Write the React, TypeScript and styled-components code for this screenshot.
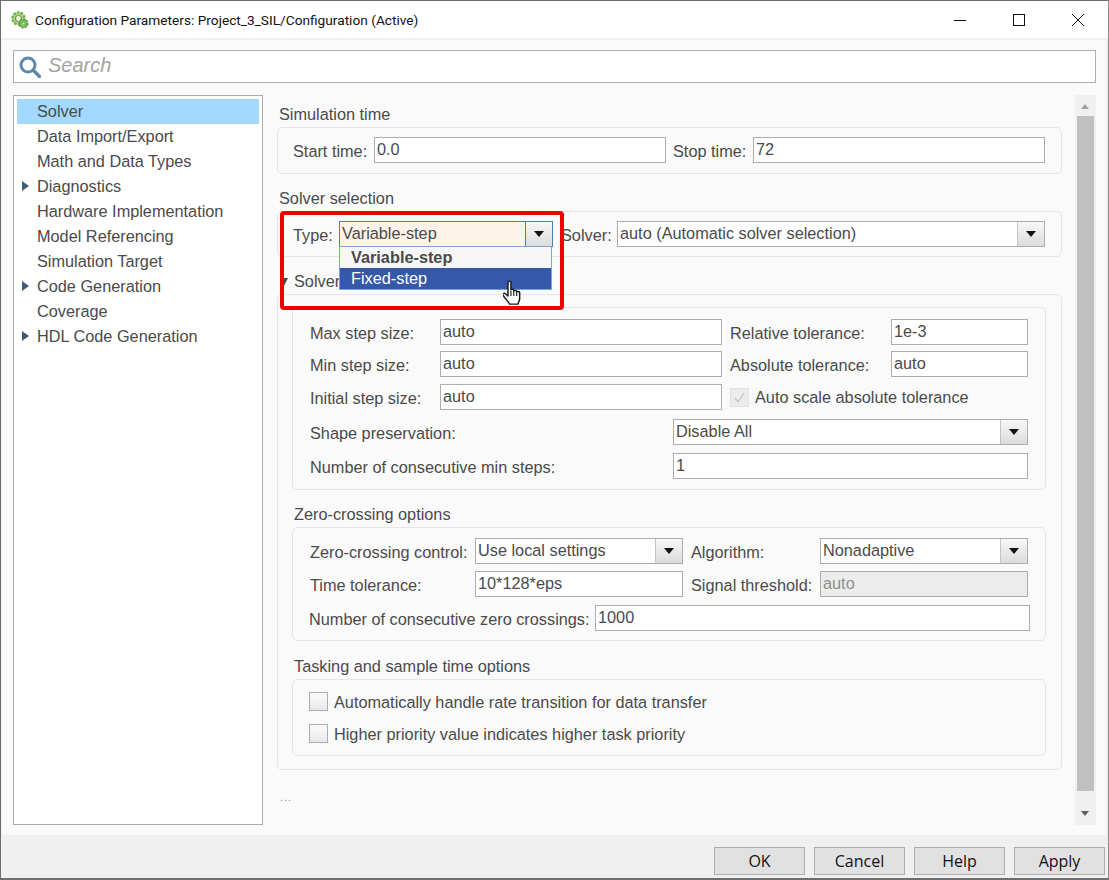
import styled, { createGlobalStyle } from "styled-components";

const GlobalStyle = createGlobalStyle`
  html, body {
    margin: 0;
    padding: 0;
    background: #f0f0f0;
  }
  * {
    box-sizing: border-box;
  }
`;

const treeItems = [
  { label: "Solver", selected: true },
  { label: "Data Import/Export" },
  { label: "Math and Data Types" },
  { label: "Diagnostics", arrow: true },
  { label: "Hardware Implementation" },
  { label: "Model Referencing" },
  { label: "Simulation Target" },
  { label: "Code Generation", arrow: true },
  { label: "Coverage" },
  { label: "HDL Code Generation", arrow: true },
];

function AppIcon() {
  return (
    <svg width="18" height="18" viewBox="0 0 18 18">
      <circle cx="7.5" cy="7.5" r="6" fill="#b5dc8f" stroke="#74b04e" strokeWidth="2.6" strokeDasharray="2.6 1.1" />
      <circle cx="7.5" cy="7.5" r="3" fill="#f4f9ee" stroke="#6aa548" strokeWidth="1.2" />
      <circle cx="12.5" cy="12.5" r="4" fill="#9ccc72" stroke="#4f9a3a" strokeWidth="2" strokeDasharray="2 1" />
      <circle cx="12.5" cy="12.5" r="1.6" fill="#e6f3d8" stroke="#3f8a2e" strokeWidth="0.8" />
    </svg>
  );
}

function SearchIcon() {
  return (
    <svg width="22" height="22" viewBox="0 0 22 22">
      <circle cx="9" cy="9" r="7" fill="none" stroke="#5f87ae" strokeWidth="3" />
      <path d="M14.500 14.500 L20.500 20.500" stroke="#5f87ae" strokeWidth="3.4" strokeLinecap="round" />
    </svg>
  );
}

function HandCursor() {
  return (
    <svg width="18" height="25" viewBox="1 0 14.5 22.5" preserveAspectRatio="none">
      <path
        d="M5 2.2c0-1.500 2.400-1.500 2.400 0V9c0-.9 2.300-1 2.300.1V10c0-1 2.300-1 2.300.2v.8c0-1 2.400-.9 2.400.3v5.400c0 2-1 3.200-1.400 5H6.200c-.5-1.800-2-3.200-3.400-5.200L1 13.700c-.8-1.200.8-2.400 1.900-1.300L5 14.500Z"
        fill="#fff"
        stroke="#1a1a1a"
        strokeWidth="1.2"
        strokeLinejoin="round"
      />
      <path d="M7.400 10v4.500M9.700 10v4.500M12 11v3.500" stroke="#1a1a1a" strokeWidth="0.9" />
    </svg>
  );
}

function Combo({ value, width, active }: { value: string; width: number; active?: boolean }) {
  return (
    <ComboBox $w={width} $active={active}>
      <ComboText>{value}</ComboText>
      <ComboArrow $active={active} />
    </ComboBox>
  );
}

export default function App() {
  return (
    <>
      <GlobalStyle />
      <Window>
        <TitleBar>
          <AppIcon />
          <TitleText>Configuration Parameters: Project_3_SIL/Configuration (Active)</TitleText>
          <WinButtons>
            <svg width="14" height="14" viewBox="0 0 14 14">
              <path d="M1 7.500H13" stroke="#111" strokeWidth="1" />
            </svg>
            <svg width="14" height="14" viewBox="0 0 14 14">
              <rect x="1.500" y="1.500" width="11" height="11" fill="none" stroke="#111" strokeWidth="1" />
            </svg>
            <svg width="14" height="14" viewBox="0 0 14 14">
              <path d="M1 1L13 13M13 1L1 13" stroke="#111" strokeWidth="1" />
            </svg>
          </WinButtons>
        </TitleBar>

        <Content>
          <SearchBar>
            <SearchIcon />
            <SearchPlaceholder>Search</SearchPlaceholder>
          </SearchBar>

          <Columns>
            <Tree>
              {treeItems.map((item) => (
                <TreeRow key={item.label} $selected={item.selected}>
                  {item.arrow && <TreeArrow />}
                  {item.label}
                </TreeRow>
              ))}
            </Tree>

            <Pane>
              <Heading $mt={11}>Simulation time</Heading>
              <Panel $h={47} $pl={15} $pt={9}>
                <Row>
                  <Label $w={81}>Start time:</Label>
                  <Field $w={292} defaultValue="0.0" readOnly />
                  <Label $w={80} $ml={7}>Stop time:</Label>
                  <Field $w={292} defaultValue="72" readOnly />
                </Row>
              </Panel>

              <Heading $mt={16}>Solver selection</Heading>
              <Panel $h={46} $pl={15} $pt={9} $relative>
                <Row>
                  <Label $w={46}>Type:</Label>
                  <ComboAnchor>
                    <Combo value="Variable-step" width={214} active />
                    <Dropdown>
                      <DropdownItem $bold>Variable-step</DropdownItem>
                      <DropdownItem $selected>Fixed-step</DropdownItem>
                    </Dropdown>
                    <Cursor>
                      <HandCursor />
                    </Cursor>
                  </ComboAnchor>
                  <Label $w={56} $ml={8}>Solver:</Label>
                  <Combo value="auto (Automatic solver selection)" width={428} />
                </Row>
                <RedBox />
              </Panel>

              <Heading $mt={16} $pl={17}>
                <Collapse />
                Solver
              </Heading>
              <OuterPanel>
                <Panel $h={183} $pl={17} $pt={11}>
                  <Row>
                    <Label $w={130}>Max step size:</Label>
                    <Field $w={282} defaultValue="auto" readOnly />
                    <Label $w={161} $ml={8}>Relative tolerance:</Label>
                    <Field $w={137} defaultValue="1e-3" readOnly />
                  </Row>
                  <Row $mt={6}>
                    <Label $w={130}>Min step size:</Label>
                    <Field $w={282} defaultValue="auto" readOnly />
                    <Label $w={161} $ml={8}>Absolute tolerance:</Label>
                    <Field $w={137} defaultValue="auto" readOnly />
                  </Row>
                  <Row $mt={7}>
                    <Label $w={130}>Initial step size:</Label>
                    <Field $w={282} defaultValue="auto" readOnly />
                    <CheckBox $ml={8} $disabled>
                      <svg width="15" height="15" viewBox="0 0 15 15">
                        <path d="M3 8l3 4 6-9" fill="none" stroke="#c4c4c4" strokeWidth="1.300" />
                      </svg>
                    </CheckBox>
                    <CheckLabel $ml={6}>Auto scale absolute tolerance</CheckLabel>
                  </Row>
                  <Row $mt={9}>
                    <Label $w={363}>Shape preservation:</Label>
                    <Combo value="Disable All" width={355} />
                  </Row>
                  <Row $mt={8}>
                    <Label $w={363}>Number of consecutive min steps:</Label>
                    <Field $w={355} defaultValue="1" readOnly />
                  </Row>
                </Panel>

                <Heading $mt={16} $pl={2}>Zero-crossing options</Heading>
                <Panel $h={114} $pl={17} $pt={10}>
                  <Row>
                    <Label $w={165}>Zero-crossing control:</Label>
                    <Combo value="Use local settings" width={208} />
                    <Label $w={129} $ml={8}>Algorithm:</Label>
                    <Combo value="Nonadaptive" width={208} />
                  </Row>
                  <Row $mt={7}>
                    <Label $w={165}>Time tolerance:</Label>
                    <Field $w={208} defaultValue="10*128*eps" readOnly />
                    <Label $w={129} $ml={8}>Signal threshold:</Label>
                    <Field $w={208} defaultValue="auto" readOnly $disabled />
                  </Row>
                  <Row $mt={8} $ml={-1}>
                    <Label $w={286}>Number of consecutive zero crossings:</Label>
                    <Field $w={435} defaultValue="1000" readOnly />
                  </Row>
                </Panel>

                <Heading $mt={17} $pl={2}>Tasking and sample time options</Heading>
                <Panel $h={77} $pl={16} $pt={12}>
                  <CheckRow>
                    <CheckBox />
                    <CheckLabel $ml={6}>Automatically handle rate transition for data transfer</CheckLabel>
                  </CheckRow>
                  <CheckRow $mt={13}>
                    <CheckBox />
                    <CheckLabel $ml={6}>Higher priority value indicates higher task priority</CheckLabel>
                  </CheckRow>
                </Panel>
              </OuterPanel>
              <Ellipsis>...</Ellipsis>
            </Pane>

            <ScrollBar>
              <ScrollUp />
              <ScrollThumb />
              <ScrollDown />
            </ScrollBar>
          </Columns>
        </Content>

        <Footer>
          <DialogButton>OK</DialogButton>
          <DialogButton>Cancel</DialogButton>
          <DialogButton>Help</DialogButton>
          <DialogButton>Apply</DialogButton>
        </Footer>
      </Window>
    </>
  );
}

const Window = styled.div`
  width: 1109px;
  height: 880px;
  display: flex;
  flex-direction: column;
  overflow: hidden;
  background: #f0f0f0;
  border-left: 1px solid #6e6e6e;
  border-top: 1px solid #6e6e6e;
  border-right: 1px solid #8a8a8a;
  border-bottom: 2px solid #6e6e6e;
  font-family: "Liberation Sans", Arial, sans-serif;
  font-size: 16.3px;
  color: #4a4a4a;
`;

const TitleBar = styled.div`
  height: 37px;
  flex: none;
  display: flex;
  align-items: center;
  padding-left: 10px;
  background: #fff;
`;

const TitleText = styled.div`
  margin-left: 6px;
  font-family: Roboto, "Open Sans", sans-serif;
  font-size: 13.7px;
  color: #111;
  white-space: nowrap;
`;

const WinButtons = styled.div`
  margin-left: auto;
  margin-right: 23px;
  display: flex;
  gap: 45px;
`;

const Content = styled.div`
  flex: none;
  height: 795px;
  margin: 2px 2px 0 1px;
  padding: 10px 0 0 11px;
  background: #fafafa;
`;

const SearchBar = styled.div`
  width: 1083px;
  height: 33px;
  display: flex;
  align-items: center;
  padding-left: 5px;
  background: #fff;
  border: 1px solid #adadad;
`;

const SearchPlaceholder = styled.span`
  margin-left: 7px;
  padding-bottom: 2px;
  font-size: 20px;
  font-style: italic;
  color: #a3a3a3;
`;

const Columns = styled.div`
  display: flex;
  margin-top: 12px;
  height: 730px;
`;

const Tree = styled.div`
  width: 250px;
  flex: none;
  padding: 3px;
  background: #fff;
  border: 1px solid #adadad;
`;

const TreeRow = styled.div<{ $selected?: boolean }>`
  position: relative;
  height: 25px;
  line-height: 25px;
  padding-left: 20px;
  background: ${(p) => (p.$selected ? "#a3d8ff" : "transparent")};
`;

const TreeArrow = styled.span`
  position: absolute;
  left: 5px;
  top: 7px;
  border-style: solid;
  border-width: 5px 0 5px 7px;
  border-color: transparent transparent transparent #3f5a78;
`;

const Pane = styled.div`
  width: 785px;
  flex: none;
  margin-left: 14px;
  margin-right: 13px;
`;

const Heading = styled.div<{ $mt?: number; $pl?: number }>`
  position: relative;
  height: 18px;
  line-height: 16px;
  margin-top: ${(p) => p.$mt ?? 0}px;
  margin-bottom: 3px;
  padding-left: ${(p) => p.$pl ?? 2}px;
  white-space: nowrap;
`;

const Collapse = styled.span`
  position: absolute;
  left: 3px;
  top: 5px;
  border-style: solid;
  border-width: 8px 4.500px 0 4.500px;
  border-color: #4a4a4a transparent transparent transparent;
`;

const Panel = styled.div<{ $h: number; $pl: number; $pt: number; $relative?: boolean }>`
  position: ${(p) => (p.$relative ? "relative" : "static")};
  height: ${(p) => p.$h}px;
  padding: ${(p) => p.$pt}px 0 0 ${(p) => p.$pl}px;
  border: 1px solid #e6e6e6;
  border-radius: 5px;
`;

const OuterPanel = styled.div`
  height: 476px;
  padding: 12px 15px 0 14px;
  border: 1px solid #e6e6e6;
  border-radius: 5px;
`;

const Row = styled.div<{ $mt?: number; $ml?: number }>`
  display: flex;
  align-items: center;
  height: 26px;
  margin-top: ${(p) => p.$mt ?? 0}px;
  margin-left: ${(p) => p.$ml ?? 0}px;
`;

const CheckRow = styled.div<{ $mt?: number }>`
  display: flex;
  align-items: center;
  height: 19px;
  margin-top: ${(p) => p.$mt ?? 0}px;
`;

const Label = styled.span<{ $w?: number; $ml?: number }>`
  flex: none;
  width: ${(p) => (p.$w ? `${p.$w}px` : "auto")};
  margin-left: ${(p) => p.$ml ?? 0}px;
  padding-top: 2px;
  white-space: nowrap;
`;

const CheckLabel = styled(Label)`
  padding-top: 1px;
`;

const Field = styled.input<{ $w: number; $disabled?: boolean }>`
  flex: none;
  width: ${(p) => p.$w}px;
  height: 26px;
  padding: 0 2px 1px;
  border: 1px solid #adadad;
  outline: none;
  border-radius: 0;
  font-family: inherit;
  font-size: 16.3px;
  color: ${(p) => (p.$disabled ? "#8e8e8e" : "#4a4a4a")};
  background: ${(p) => (p.$disabled ? "#ececec" : "#fff")};
`;

const ComboAnchor = styled.div`
  position: relative;
  flex: none;
`;

const ComboBox = styled.div<{ $w: number; $active?: boolean }>`
  flex: none;
  display: flex;
  width: ${(p) => p.$w}px;
  height: 26px;
  border: 1px solid ${(p) => (p.$active ? "#4a80b8" : "#adadad")};
  background: ${(p) => (p.$active ? "#fdf3e8" : "#fff")};
`;

const ComboText = styled.span`
  flex: 1;
  line-height: 23px;
  padding-left: 2px;
  white-space: nowrap;
  overflow: hidden;
`;

const ComboArrow = styled.span<{ $active?: boolean }>`
  position: relative;
  flex: none;
  width: 27px;
  border-left: 1px solid ${(p) => (p.$active ? "#4a80b8" : "#c4c4c4")};
  background: linear-gradient(#f7f7f7, #dcdcdc);

  &::after {
    content: "";
    position: absolute;
    left: 8px;
    top: 9px;
    border-style: solid;
    border-width: 6px 5px 0 5px;
    border-color: #111 transparent transparent transparent;
  }
`;

const Dropdown = styled.div`
  position: absolute;
  z-index: 2;
  left: 0;
  top: 25px;
  width: 213px;
  height: 44px;
  background: #f7f7f7;
  border: 1px solid #74a6d6;
`;

const DropdownItem = styled.div<{ $bold?: boolean; $selected?: boolean }>`
  height: 21px;
  line-height: 21px;
  padding-left: 11px;
  font-weight: ${(p) => (p.$bold ? 700 : 400)};
  color: ${(p) => (p.$selected ? "#fff" : "#4a4a4a")};
  background: ${(p) => (p.$selected ? "#3558a8" : "transparent")};
`;

const Cursor = styled.div`
  position: absolute;
  z-index: 3;
  left: 164px;
  top: 59px;
  line-height: 0;
`;

const RedBox = styled.div`
  position: absolute;
  z-index: 4;
  left: 2px;
  top: -1px;
  width: 284px;
  height: 99px;
  border: 4px solid #f00000;
  border-radius: 4px;
  pointer-events: none;
`;

const CheckBox = styled.span<{ $ml?: number; $disabled?: boolean }>`
  flex: none;
  display: flex;
  align-items: center;
  justify-content: center;
  width: 19px;
  height: 19px;
  margin-left: ${(p) => p.$ml ?? 0}px;
  border: 1px solid ${(p) => (p.$disabled ? "#e2e2e2" : "#adadad")};
  background: ${(p) => (p.$disabled ? "#ececec" : "linear-gradient(#fafafa, #e8e8e8)")};
`;

const Ellipsis = styled.div`
  margin-top: 21px;
  padding-left: 3px;
  font-size: 11px;
  letter-spacing: 1px;
  color: #8a8a8a;
`;

const ScrollBar = styled.div`
  position: relative;
  width: 21px;
  flex: none;
  background: #f0f0f0;
`;

const ScrollUp = styled.span`
  position: absolute;
  left: 6px;
  top: 9px;
  border-style: solid;
  border-width: 0 4.500px 5px 4.500px;
  border-color: transparent transparent #a0a0a0 transparent;
`;

const ScrollThumb = styled.div`
  position: absolute;
  left: 2px;
  right: 2px;
  top: 21px;
  bottom: 34px;
  background: #c0c0c0;
`;

const ScrollDown = styled.span`
  position: absolute;
  left: 6px;
  bottom: 9px;
  border-style: solid;
  border-width: 5px 4.500px 0 4.500px;
  border-color: #606060 transparent transparent transparent;
`;

const Footer = styled.div`
  flex: 1;
  display: flex;
  justify-content: flex-end;
  gap: 9px;
  padding: 12px 3px 0 0;
`;

const DialogButton = styled.div`
  width: 91px;
  height: 28px;
  line-height: 26px;
  text-align: center;
  background: #e1e1e1;
  border: 1px solid #adadad;
  font-family: "Open Sans", "Noto Sans", sans-serif;
  font-size: 16px;
  color: #111;
`;
